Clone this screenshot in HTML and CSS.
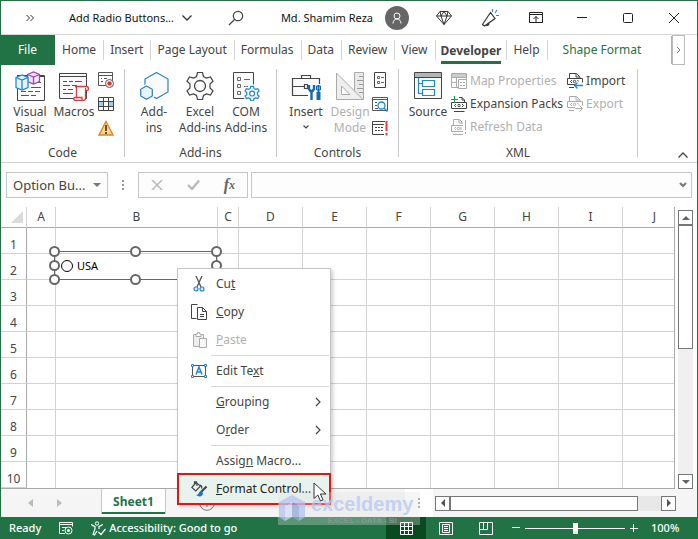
FILE: index.html
```
<!DOCTYPE html>
<html lang="en">
<head>
	<meta charset="utf-8">
	<title>Add Radio Buttons - Excel</title>
	<link rel="stylesheet" href="styles.css">
</head>
<body>
	<div class="window">
		<header class="title-bar">
			<button class="more" aria-label="More commands"><svg width="10" height="8" viewBox="0 0 10 8"><path d="M1.5 1l3 3-3 3M5.500 1l3 3-3 3" stroke="#333"/></svg></button>
			<button class="file-name">Add Radio Buttons... <svg width="10" height="6" viewBox="0 0 10 6"><path d="M.5.5L5 5 9.500.5" stroke="#333" stroke-width="1.300"/></svg></button>
			<button class="search" aria-label="Search"><svg width="16" height="16" viewBox="0 0 16 16"><circle cx="10" cy="6" r="4.700" stroke="#444" stroke-width="1.200"/><path d="M6.500 9.500L1 15" stroke="#444" stroke-width="1.300"/></svg></button>
			<span class="user">Md. Shamim Reza</span>
			<button class="avatar" aria-label="Account"><svg width="10" height="12" viewBox="0 0 10 12"><circle cx="5" cy="4" r="3" stroke="#fff"/><path d="M1 11.500c0-6 8-6 8 0" stroke="#fff"/></svg></button>
			<button class="win" aria-label="Premium"><svg width="16" height="14" viewBox="0 0 16 14"><path d="M4 .5h8l3.500 4.500L8 13.500.5 5zM.5 5h15M4 .5L5 5l3 8.500L11 5l1-4.500M5 5l3-4.500L11 5" stroke="#333"/></svg></button>
			<button class="win" aria-label="What's new"><svg width="18" height="18" viewBox="0 0 18 18"><path d="M9.500 3.500L1.500 15.500l2 1.500L14 9.500zM5 15.500c1 2 3.500.5 2.800-1.500" stroke="#333" stroke-width="1.200"/><path d="M11.500 3V0M14 4l2-3M15 6.500h3" stroke="#2a8dd4" stroke-width="1.200"/></svg></button>
			<button class="win" aria-label="Ribbon display options"><svg width="14" height="12" viewBox="0 0 14 12"><path d="M.5.500h13v10H.5zM.5 2.500h13M7 10V4.500M4.500 7L7 4.500 9.500 7" stroke="#222"/></svg></button>
			<button class="win" aria-label="Minimize"><svg width="10" height="10" viewBox="0 0 10 10"><path d="M0 4.500h10" stroke="#222"/></svg></button>
			<button class="win" aria-label="Maximize"><svg width="10" height="10" viewBox="0 0 10 10"><rect x=".5" y=".5" width="9" height="9" rx="1" stroke="#222"/></svg></button>
			<button class="win" aria-label="Close"><svg width="10" height="10" viewBox="0 0 10 10"><path d="M0 0l10 10M10 0L0 10" stroke="#222"/></svg></button>
		</header>

		<nav class="tabs">
			<button class="tab file">File</button>
			<button class="tab home">Home</button>
			<button class="tab">Insert</button>
			<button class="tab">Page Layout</button>
			<button class="tab">Formulas</button>
			<button class="tab">Data</button>
			<button class="tab">Review</button>
			<button class="tab">View</button>
			<button class="tab active"><span>Developer</span></button>
			<button class="tab">Help</button>
			<button class="tab context">Shape Format</button>
			<button class="tab-next" aria-label="Scroll tabs"><svg width="5" height="6" viewBox="0 0 5 6"><path d="M1 0l3 3-3 3" stroke="#777"/></svg></button>
		</nav>

		<section class="ribbon">
			<div class="group code">
				<div class="tools">
					<button class="tool">
						<svg width="30" height="30" viewBox="0 0 30 30"><path d="M2.500 4.500h27v25h-27z" fill="#fff" stroke="#444"/><path d="M2 5h27" stroke="#444" stroke-width="2"/><path d="M16 11.500h4M22 11.500h4M16 16.500h10M6 20.500h5M13 20.500h5M20 20.500h5M6 24.500h8M16 24.500h5" stroke="#555"/><path d="M12.500 3.500L18.500 1l6 2.500v7l-6 2.500-6-2.500z" fill="#f3e6f7" stroke="#a540b5" stroke-width="1.300"/><path d="M12.500 3.500l6 2.500 6-2.500M18.500 6v7" stroke="#a540b5" stroke-width="1.300"/><path d="M1 6.500L7 4l6 2.500v10L7 19l-6-2.500z" fill="#e7f3fc" stroke="#2188d0" stroke-width="1.300"/><path d="M1 6.500L7 9l6-2.500M7 9v10" stroke="#2188d0" stroke-width="1.300"/></svg>
						<span>Visual<br>Basic</span>
					</button>
					<button class="tool">
						<svg width="30" height="30" viewBox="0 0 30 30"><path d="M.5 2.500h27v25H.5z" fill="#fafafa" stroke="#444"/><path d="M.5 5.500h27" stroke="#444"/><path d="M4 10.500h4M10 10.500h4M16 10.500h7M4 14.500h7M13 14.500h5M4 18.500h3M9 18.500h5M4 22.500h10" stroke="#555"/><path d="M16.500 15.500h11c2.500 0 2.500 4 0 4h-1.500v8c0 2.500-3 2.500-3 0v-1.500h-6.500" fill="#fff"/><path d="M17 15.500h10.500c2.500 0 2.500 4 .5 4h-1.500v7.500c0 2-1 2.500-2 2.500H16c-1.500 0-1.500-3 0-3h7v1.500c0 1 .5 1.500 1.500 1.500M17.500 26V17c0-1-.5-1.500-1.500-1.500h3M26.500 19v-2" fill="#fff" stroke="#e8373d" stroke-width="1.300"/></svg>
						<span>Macros</span>
					</button>
				</div>
				<div class="small-tools">
					<button aria-label="Record Macro"><svg width="16" height="16" viewBox="0 0 16 16"><path d="M.5.500h14v13H.5zM.5 3.500h14M3 6.500h1M6 6.500h3M3 9.500h2" stroke="#555"/><circle cx="11.500" cy="11.500" r="4" fill="#fff" stroke="#555"/><circle cx="11.500" cy="11.500" r="2.200" fill="#ee2c2c"/></svg></button>
					<button aria-label="Use Relative References"><svg width="16" height="14" viewBox="0 0 16 14"><path fill="#9fcdf0" d="M0 5h5v4H0zM11 5h5v4h-5z"/><path d="M.5.500h15v13H.5zM.5 4.500h15M.5 9.500h15M5.500 0v14M10.500 0v14" stroke="#444"/></svg></button>
					<button aria-label="Macro Security"><svg width="16" height="16" viewBox="0 0 16 16"><path d="M8 1.500l7 13.500H1z" fill="#fbd68c" stroke="#e8811a" stroke-width="1.300"/><path d="M8 5v6M8 12v2" stroke="#333" stroke-width="1.600"/></svg></button>
				</div>
				<div class="group-name">Code</div>
			</div>

			<div class="group addins">
				<div class="tools">
					<button class="tool">
						<svg width="30" height="30" viewBox="0 0 30 30"><path d="M17.500 1.500L29 8v13l-11.500 6.500L6 21V8z" fill="#fafafa" stroke="#2a80c8" stroke-width="1.200"/><path d="M7.500 15l5.800 3.300v6.600l-5.800 3.300-5.800-3.300v-6.600z" fill="#fff" stroke="#fff" stroke-width="4"/><path d="M7.500 15l5.800 3.300v6.600l-5.800 3.300-5.800-3.300v-6.600z" fill="#e9f4fc" stroke="#2a80c8" stroke-width="1.200"/></svg>
						<span>Add-<br>ins</span>
					</button>
					<button class="tool">
						<svg width="30" height="30" viewBox="0 0 30 30"><path d="M12.500 1.500h5l1 4 3 1.600 4-1.100 2.500 4.200-3 2.800v4l3 2.800-2.500 4.200-4-1.100-3 1.600-1 4h-5l-1-4-3-1.600-4 1.100L2 19.800 5 17v-4l-3-2.800L4.500 6l4 1.100 3-1.600z" fill="#fafafa" stroke="#444" stroke-width="1.200"/><circle cx="15" cy="15" r="5.500" fill="#fff" stroke="#444" stroke-width="1.300"/></svg>
						<span>Excel<br>Add-ins</span>
					</button>
					<button class="tool">
						<svg width="30" height="30" viewBox="0 0 30 30"><path d="M2.500 1.500h20v26h-20z" fill="#fafafa" stroke="#444"/><path d="M6.500 6.500h3v3h-3zM6.500 13.500h3v3h-3zM6.500 20.500h3v3h-3zM13 8.500h6M13 15.500h4" stroke="#666"/><g transform="translate(13 14.500) scale(.54)"><path d="M12.500 1.500h5l1 4 3 1.600 4-1.100 2.500 4.200-3 2.800v4l3 2.800-2.500 4.200-4-1.100-3 1.600-1 4h-5l-1-4-3-1.600-4 1.100L2 19.800 5 17v-4l-3-2.800L4.500 6l4 1.100 3-1.600z" fill="#fff" stroke="#fff" stroke-width="7"/><path d="M12.500 1.500h5l1 4 3 1.600 4-1.100 2.500 4.200-3 2.800v4l3 2.800-2.500 4.200-4-1.100-3 1.600-1 4h-5l-1-4-3-1.600-4 1.100L2 19.800 5 17v-4l-3-2.800L4.500 6l4 1.100 3-1.600z" fill="#e9f4fc" stroke="#2188d0" stroke-width="2.200"/><circle cx="15" cy="15" r="4.500" fill="#fff" stroke="#2188d0" stroke-width="2.200"/></g></svg>
						<span>COM<br>Add-ins</span>
					</button>
				</div>
				<div class="group-name">Add-ins</div>
			</div>

			<div class="group controls">
				<div class="tools">
					<button class="tool">
						<svg width="30" height="30" viewBox="0 0 30 30"><path d="M1.500 7.500h27v17h-27zM10.500 7v-2.500h9V7" fill="#fafafa" stroke="#444" stroke-width="1.200"/><path d="M1.500 15.500h12M17 15.500h11M13.500 13.500h3v4h-3z" stroke="#444" stroke-width="1.200"/><path d="M17 13h13v17H17z" fill="#fff"/><path d="M18 14v4l1.500 2h2l1.500-2v-4M20.500 20v9" stroke="#1668b3" stroke-width="2.400"/><path d="M27.500 14v7" stroke="#1668b3" stroke-width="2"/><path d="M25.500 15h4v4h-4z" stroke="#1668b3"/><path d="M27.500 21v8" stroke="#1668b3" stroke-width="4"/></svg>
						<span>Insert<br><svg class="drop" width="6" height="4" viewBox="0 0 6 4"><path d="M.5.500L3 3 5.500.5" stroke="#444" stroke-width="1.200"/></svg></span>
					</button>
					<button class="tool" disabled>
						<svg width="30" height="30" viewBox="0 0 30 30"><path d="M19.500 1.500h9v27h-9z" fill="#e9e9e9" stroke="#aaa"/><path d="M24 5.500h4M22 9.500h6M24 13.500h4M22 17.500h6M24 21.500h4" stroke="#999"/><path d="M1.500 2v26.500H28z" fill="#eee" stroke="#aaa"/><path d="M6.500 15v8.500h8.500z" fill="#fff" stroke="#aaa"/></svg>
						<span>Design<br>Mode</span>
					</button>
				</div>
				<div class="small-tools">
					<button aria-label="Properties"><svg width="16" height="16" viewBox="0 0 16 16"><path d="M2.500.500h11v15h-11z" stroke="#444"/><path d="M5.500 4.500h2v2h-2zM5.500 9.500h2v2h-2zM9 5.500h3M9 10.500h3" stroke="#666"/></svg></button>
					<button aria-label="View Code"><svg width="16" height="16" viewBox="0 0 16 16"><path d="M.5 1.500h15v13H.5zM.5 3.500h15M3 6.500h2M3 9.500h2M3 12.500h3" stroke="#555"/><circle cx="9.500" cy="9.500" r="3.500" fill="#eaf5fd" stroke="#2188d0" stroke-width="1.300"/><path d="M12 12l3.500 3.500" stroke="#2188d0" stroke-width="1.500"/></svg></button>
					<button aria-label="Run Dialog"><svg width="16" height="16" viewBox="0 0 16 16"><path d="M13 1.500H.5v13H12M.5 4.500H12M3 7.500h2M6 7.500h2M9 7.500h2M3 10.500h2M6 10.500h2M9 10.500h2" stroke="#444"/><path d="M14.500 1v10M14.500 13v2.500" stroke="#f03a3a" stroke-width="2"/></svg></button>
				</div>
				<div class="group-name">Controls</div>
			</div>

			<div class="group xml">
				<div class="tools">
					<button class="tool">
						<svg width="30" height="30" viewBox="0 0 30 30"><path d="M1.500 1.500h27v26h-27z" fill="#fafafa" stroke="#444"/><path d="M2 2h26v4H2z" fill="#b5b5b5"/><path d="M1.500 6.500h27" stroke="#444"/><path d="M5.500 7v15.500h4M5.500 12.500h4M9.500 9.500h12v6h-12zM9.500 18.500h12v6h-12z" stroke="#2188d0" stroke-width="1.200"/></svg>
						<span>Source</span>
					</button>
				</div>
				<div class="commands">
					<button disabled><svg width="16" height="16" viewBox="0 0 16 16"><path d="M.5.500h15v14H.5zM.5 4.500h15M.5 9.500H6M5.500 1v14M10.500 1v4" stroke="#aaa"/><path fill="#ccc" d="M1 1h14v3H1z"/><path d="M7.500 6.500h8v9h-8z" fill="#fff" stroke="#aaa"/><path d="M9 9h2v1H9zM9 12h2v1H9zM12 9h2v1h-2zM12 12h2v1h-2z" fill="#aaa"/></svg>Map Properties</button>
					<button><svg width="16" height="16" viewBox="0 0 16 16"><path d="M8 1.500h3l2.500 2.500v2M11 1.500V4h2.500M3 15.500h10.500M.5 6.500h15v6H.5z" stroke="#444"/><path d="M5 8L3.500 9.500 5 11M11 8l1.500 1.500L11 11" stroke="#444"/><circle cx="8" cy="9.500" r="1.200" stroke="#444"/><path d="M3.500 0v7M0 3.500h7" stroke="#1f9a4c" stroke-width="1.200"/></svg>Expansion Packs</button>
					<button disabled><svg width="16" height="16" viewBox="0 0 16 16"><path d="M2.500 6V.5h6L11 3v2M8 .500V4h3M2 15.500h10M12 6.500H.5v6H12M14.500 1v10M14.500 13v2" stroke="#aaa"/><path d="M5 8L3.500 9.500 5 11M10 8v3" stroke="#aaa"/><circle cx="7.500" cy="9.500" r="1.200" stroke="#aaa"/></svg>Refresh Data</button>
					<button><svg width="16" height="16" viewBox="0 0 16 16"><path d="M2.500 5V.5h7L13 4v1.500M9 .500V4h4M2 14.500h5M8 11.500H.5v-6h15v4" stroke="#444"/><path d="M5 7L3.500 8.500 5 10M10.500 7l1 1.500" stroke="#444"/><circle cx="7.500" cy="8.500" r="1.200" stroke="#444"/><path d="M16 12.500H7.500M10.500 9.500l-3 3 3 3" stroke="#2188d0" stroke-width="1.300"/></svg>Import</button>
					<button disabled><svg width="16" height="16" viewBox="0 0 16 16"><path d="M2.500 5V.5h7L13 4v1.500M9 .500V4h4M2 14.500h5M8 11.500H.5v-6h15v4" stroke="#aaa"/><path d="M5 7L3.500 8.500 5 10M10.500 7l1 1.500" stroke="#aaa"/><circle cx="7.500" cy="8.500" r="1.200" stroke="#aaa"/><path d="M8 12.500h7.500M12.500 9.500l3 3-3 3" stroke="#aaa"/></svg>Export</button>
				</div>
				<div class="group-name">XML</div>
			</div>

			<button class="collapse" aria-label="Collapse the ribbon"><svg width="10" height="6" viewBox="0 0 10 6"><path d="M.5 5.500L5 1l4.500 4.500" stroke="#444" stroke-width="1.300"/></svg></button>
		</section>

		<div class="formula-bar">
			<div class="name-box">
				<input type="text" aria-label="Name box" value="Option Bu...">
				<button aria-label="Open name list"><svg width="8" height="4" viewBox="0 0 8 4"><path d="M0 0h8L4 4z" fill="#777"/></svg></button>
			</div>
			<svg class="grip" width="2" height="10" viewBox="0 0 2 10"><path d="M1 0v2M1 4v2M1 8v2" stroke="#999" stroke-width="2"/></svg>
			<div class="formula-buttons">
				<button aria-label="Cancel"><svg width="12" height="10" viewBox="0 0 12 10"><path d="M1 0l10 10M11 0L1 10" stroke="#bbb" stroke-width="1.600"/></svg></button>
				<button aria-label="Enter"><svg width="13" height="10" viewBox="0 0 13 10"><path d="M1 5l4 4 7-8.500" stroke="#bbb" stroke-width="2.400"/></svg></button>
				<button class="fx" aria-label="Insert function">f<small>x</small></button>
			</div>
			<div class="formula">
				<input type="text" aria-label="Formula bar">
				<button aria-label="Expand formula bar"><svg width="8" height="6" viewBox="0 0 8 6"><path d="M1 1l3 3 3-3" stroke="#777" stroke-width="2"/></svg></button>
			</div>
		</div>

		<main class="sheet-area">
			<table class="sheet">
				<colgroup><col class="c-num"><col class="c-a"><col class="c-b"><col class="c-c"><col class="c-std"><col class="c-std"><col class="c-std"><col class="c-std"><col class="c-std"><col class="c-std"><col></colgroup>
				<thead>
					<tr><th class="corner"><svg width="12" height="12" viewBox="0 0 12 12"><path d="M12 0v12H0z" fill="#dadada"/></svg></th><th>A</th><th>B</th><th>C</th><th>D</th><th>E</th><th>F</th><th>G</th><th>H</th><th>I</th><th class="last">J</th></tr>
				</thead>
				<tbody>
					<tr><th>1</th><td></td><td></td><td></td><td></td><td></td><td></td><td></td><td></td><td></td><td></td></tr>
					<tr><th>2</th><td></td><td></td><td></td><td></td><td></td><td></td><td></td><td></td><td></td><td></td></tr>
					<tr><th>3</th><td></td><td></td><td></td><td></td><td></td><td></td><td></td><td></td><td></td><td></td></tr>
					<tr><th>4</th><td></td><td></td><td></td><td></td><td></td><td></td><td></td><td></td><td></td><td></td></tr>
					<tr><th>5</th><td></td><td></td><td></td><td></td><td></td><td></td><td></td><td></td><td></td><td></td></tr>
					<tr><th>6</th><td></td><td></td><td></td><td></td><td></td><td></td><td></td><td></td><td></td><td></td></tr>
					<tr><th>7</th><td></td><td></td><td></td><td></td><td></td><td></td><td></td><td></td><td></td><td></td></tr>
					<tr><th>8</th><td></td><td></td><td></td><td></td><td></td><td></td><td></td><td></td><td></td><td></td></tr>
					<tr><th>9</th><td></td><td></td><td></td><td></td><td></td><td></td><td></td><td></td><td></td><td></td></tr>
					<tr><th>10</th><td></td><td></td><td></td><td></td><td></td><td></td><td></td><td></td><td></td><td></td></tr>
				</tbody>
			</table>
			<div class="v-scroll">
				<button aria-label="Scroll up"><svg width="8" height="4" viewBox="0 0 8 4"><path d="M0 4h8L4 0z" fill="#666"/></svg></button>
				<div class="thumb"></div>
				<button aria-label="Scroll down"><svg width="8" height="4" viewBox="0 0 8 4"><path d="M0 0h8L4 4z" fill="#666"/></svg></button>
			</div>

			<!-- selected option button with its resize handles -->
			<div class="shape">
				<label><input type="radio" name="country">USA</label>
				<i class="handle top left"></i><i class="handle top center"></i><i class="handle top right"></i>
				<i class="handle middle left"></i><i class="handle middle right"></i>
				<i class="handle bottom left"></i><i class="handle bottom center"></i><i class="handle bottom right"></i>
			</div>

			<div class="menu" role="menu">
				<button role="menuitem"><svg width="16" height="16" viewBox="0 0 16 16"><path d="M5 0l5 11M11 0L6 11" stroke="#555" stroke-width="1.300"/><circle cx="5" cy="13" r="2" fill="#d4ebfa" stroke="#2188d0" stroke-width="1.200"/><circle cx="11" cy="13" r="2" fill="#d4ebfa" stroke="#2188d0" stroke-width="1.200"/></svg><span>Cu<u>t</u></span></button>
				<button role="menuitem"><svg width="16" height="16" viewBox="0 0 16 16"><path d="M5.500 14.500H.5V.5h6M6.500 3.500h5l4 4v8h-9zM11.500 3.500v4h4M9 10.500h4M9 12.500h4" stroke="#444"/></svg><span><u>C</u>opy</span></button>
				<button role="menuitem" disabled><svg width="16" height="16" viewBox="0 0 16 16"><path d="M2.500 2.500h10v12h-10z" fill="#eee" stroke="#aaa"/><path d="M5 4.500V2h1.500V.5h2V2H10v2.500z" fill="#fff" stroke="#aaa"/><path d="M8.500 6.500h7v9h-7z" fill="#f8f8f8" stroke="#aaa"/></svg><span><u>P</u>aste</span></button>
				<hr>
				<button role="menuitem"><svg width="16" height="14" viewBox="0 0 16 14"><path d="M1.500 1.500h13v11h-13z" stroke="#555"/><path d="M5 10.500L8 3l3 7.500M6 8h4" stroke="#2188d0" stroke-width="1.500"/><path d="M.5.500h2v2h-2zM13.500.5h2v2h-2zM.5 11.500h2v2h-2zM13.500 11.500h2v2h-2z" fill="#fff" stroke="#2188d0"/></svg><span>Edit Te<u>x</u>t</span></button>
				<hr>
				<button role="menuitem"><span><u>G</u>rouping</span><svg class="arrow" width="6" height="10" viewBox="0 0 6 10"><path d="M1 1l4 4-4 4" stroke="#444" stroke-width="1.200"/></svg></button>
				<button role="menuitem"><span>O<u>r</u>der</span><svg class="arrow" width="6" height="10" viewBox="0 0 6 10"><path d="M1 1l4 4-4 4" stroke="#444" stroke-width="1.200"/></svg></button>
				<hr>
				<button role="menuitem"><span>Assig<u>n</u> Macro...</span></button>
				<button role="menuitem" class="highlight"><svg width="16" height="16" viewBox="0 0 16 16"><path d="M5 1.500L.8 6.500l4 3.500 4.700-5zM3.500 3V.8h2L6 5M9 4c2 .5 2 2 1.500 3.500" stroke="#444" stroke-width="1.200"/><path d="M15.500 5.500L10 11" stroke="#444" stroke-width="2.200"/><path d="M10.500 10c-3-.5-2 4-5.500 4 3 2.500 7 1.500 7-2z" fill="#1876c8"/></svg><span><u>F</u>ormat Control...</span></button>
			</div>
		</main>

		<div class="sheet-tabs">
			<button class="nav-arrow" aria-label="Previous sheet"><svg width="5" height="8" viewBox="0 0 5 8"><path d="M5 0v8L0 4z" fill="#bbb"/></svg></button>
			<button class="nav-arrow" aria-label="Next sheet"><svg width="5" height="8" viewBox="0 0 5 8"><path d="M0 0v8l5-4z" fill="#bbb"/></svg></button>
			<button class="sheet-tab">Sheet1</button>
			<button class="add-sheet" aria-label="New sheet"><svg width="16" height="16" viewBox="0 0 16 16"><circle cx="8" cy="8" r="7.300" stroke="#777"/><path d="M8 4v8M4 8h8" stroke="#777"/></svg></button>
			<div class="splitter"><svg width="2" height="10" viewBox="0 0 2 10"><path d="M1 0v2M1 4v2M1 8v2" stroke="#999" stroke-width="2"/></svg></div>
			<div class="h-scroll">
				<button aria-label="Scroll left"><svg width="4" height="8" viewBox="0 0 4 8"><path d="M4 0v8L0 4z" fill="#555"/></svg></button>
				<div class="thumb"></div>
				<button aria-label="Scroll right"><svg width="4" height="8" viewBox="0 0 4 8"><path d="M0 0v8l4-4z" fill="#555"/></svg></button>
			</div>
			<div class="watermark">
				<svg width="28" height="30" viewBox="0 0 28 30"><path d="M14 1l13 7v15l-6 4V12l-7-4-7 4v15l-6-4V8z" fill="#b6c5f0"/><path d="M14 8l7 4v15l-7-4z" fill="#98abd9"/><path d="M14 8l-7 4v15l7-4z" fill="#d5def5"/></svg>
				<div class="brand"><b>exceldemy</b><small>EXCEL - DATA - BI</small></div>
			</div>
			<svg class="cursor" width="14" height="20" viewBox="0 0 14 20"><path d="M1 1v15.500l3.800-3.500 2.700 6 2.500-1.200-2.600-5.800H13z" fill="#fff" stroke="#333"/></svg>
		</div>

		<footer class="status-bar">
			<span class="ready">Ready</span>
			<button class="record" aria-label="Record macro"><svg width="14" height="13" viewBox="0 0 14 13"><path d="M6 11.500H.5V.5h13v4M.5 2.500h13M3 5.500h4M3 8.500h2" stroke="#fff"/><circle cx="9.500" cy="8.500" r="3.500" stroke="#fff"/><circle cx="9.500" cy="8.500" r="1.500" fill="#fff"/></svg></button>
			<button class="access"><svg width="15" height="15" viewBox="0 0 15 15"><circle cx="6" cy="2.500" r="1.700" stroke="#fff"/><path d="M.5 3c0 2 3 2 3.500 2.500V8l-2 5.500 1.500.5L6 10M11.500 3c0 2-3 2-3.500 2.500V8M7.500 11l2.500 2.500L14.500 8" stroke="#fff" stroke-width="1.200"/></svg>Accessibility: Good to go</button>
			<button class="view current" aria-label="Normal view"><svg width="13" height="13" viewBox="0 0 13 13"><path d="M.5.500h12v12H.5zM.5 4.500h12M.5 8.500h12M4.500 0v13M8.500 0v13" stroke="#fff"/></svg></button>
			<button class="view" aria-label="Page layout view"><svg width="14" height="13" viewBox="0 0 14 13"><path d="M.5.500h13v12H.5zM3.500 2.500h7v8h-7zM5 4.500h4M5 6.500h4M5 8.500h4" stroke="#fff"/></svg></button>
			<button class="view" aria-label="Page break view"><svg width="14" height="13" viewBox="0 0 14 13"><path d="M.5.500h13v12H.5zM.5 7.500h8V.5M4.500 0v8" stroke="#fff"/></svg></button>
			<div class="zoom">
				<button aria-label="Zoom out"><svg width="8" height="8" viewBox="0 0 8 8"><path d="M0 3.500h8" stroke="#fff"/></svg></button>
				<input type="range" aria-label="Zoom" min="0" max="200" value="100">
				<button aria-label="Zoom in"><svg width="8" height="8" viewBox="0 0 8 8"><path d="M0 4.500h8M3.500 0v8" stroke="#fff"/></svg></button>
			</div>
			<span class="percent">100%</span>
		</footer>
	</div>
</body>
</html>
```

FILE: styles.css
```
* {
	box-sizing: border-box;
}

body {
	margin: 0;
	font-family: "Noto Sans", "Open Sans", sans-serif;
	font-size: 12px;
	line-height: 16px;
	color: #444;
	background-color: #fff;
}

button,
input {
	font: inherit;
	color: inherit;
	margin: 0;
	padding: 0;
	border: 0;
	background: none;
}

button {
	display: flex;
	align-items: center;
	justify-content: center;
	white-space: nowrap;
}

button:disabled {
	color: #b0b0b0;
}

input {
	min-width: 0;
	outline: none;
}

svg {
	flex: none;
	fill: none;
}

.window {
	display: flex;
	flex-direction: column;
	min-height: 100vh;
	border: 1px solid #217346;
	border-bottom: 0;
}

/* title bar */
.title-bar {
	display: flex;
	align-items: center;
	height: 34px;
	border-bottom: 1px solid #d8d8d8;
	font-size: 11px;
	color: #111;
}

.more {
	width: 58px;
}

.file-name {
	margin-left: 10px;
	gap: 8px;
}

.search {
	width: 16px;
	margin-left: 36px;
}

.user {
	margin-left: auto;
	white-space: nowrap;
}

.avatar {
	width: 24px;
	height: 24px;
	margin: 0 12px;
	border-radius: 50%;
	background-color: #666;
}

.win {
	width: 46px;
	height: 33px;
}

/* ribbon tabs */
.tabs {
	display: flex;
	height: 30px;
}

.tab {
	padding: 0 7px 0 6px;
	border-right: 1px solid transparent;
	border-image: linear-gradient(transparent 6px, #d4d4d4 6px, #d4d4d4 24px, transparent 24px) 1;
}

.tab.file {
	width: 54px;
	border: 0;
	color: #fff;
	background-color: #217346;
}

.tab.home {
	padding-left: 7px;
}

.tab.active {
	padding: 0 5px;
	font-weight: bold;
}

.tab.active span {
	height: 28px;
	line-height: 30px;
	border-bottom: 3px solid #217346;
}

.tab.context {
	margin-left: 9px;
	border: 0;
	color: #217346;
}

.tab-next {
	width: 13px;
	margin-left: auto;
	margin-right: 12px;
	border: 1px solid #bbb;
	box-shadow: -2px 0 0 -1px #8cc3a3;
}

/* ribbon */
.ribbon {
	display: flex;
	height: 98px;
	padding-top: 4px;
	border-bottom: 1px solid #d0d0d0;
}

.group {
	display: grid;
	grid-template-columns: auto 1fr;
	grid-template-rows: 76px 16px;
	height: 88px;
	border-right: 1px solid #c8c8c8;
}

.group-name {
	grid-column: 1 / -1;
	text-align: center;
}

.tools {
	display: flex;
	padding-left: 7px;
}

.tool {
	flex-direction: column;
	justify-content: flex-start;
	width: 44px;
	padding-top: 2px;
	gap: 3px;
}

.tool .drop {
	margin-bottom: 3px;
}

.small-tools {
	display: flex;
	flex-direction: column;
	gap: 8px;
	padding-top: 3px;
}

.small-tools button {
	width: 16px;
	height: 16px;
}

.code {
	width: 124px;
}

.code .small-tools {
	padding-left: 2px;
}

.addins {
	width: 152px;
}

.addins .tools {
	padding-left: 6px;
}

.addins .tool {
	width: 46px;
}

.controls {
	width: 122px;
}

.xml {
	width: 239px;
}

.commands {
	display: grid;
	grid-template-rows: repeat(3, 23px);
	grid-auto-flow: column;
	justify-content: start;
	column-gap: 4px;
	padding-left: 1px;
}

.commands button {
	justify-content: flex-start;
	gap: 3px;
}

.collapse {
	align-self: flex-end;
	margin: 0 9px 4px auto;
}

/* formula bar */
.formula-bar {
	display: flex;
	align-items: center;
	height: 44px;
	padding: 0 5px;
}

.name-box,
.formula-buttons,
.formula {
	display: flex;
	height: 26px;
	border: 1px solid #c6c6c6;
	background-color: #fdfdfd;
}

.name-box {
	width: 102px;
	padding: 0 6px;
}

.name-box input,
.formula input {
	flex: 1;
	font-size: 13px;
}

.grip {
	margin: 0 14px;
}

.formula-buttons {
	width: 110px;
	justify-content: space-around;
	margin-right: 3px;
}

.fx {
	font-family: "Liberation Serif", serif;
	font-style: italic;
	font-weight: bold;
	font-size: 16px;
	color: #666;
}

.fx small {
	font-size: 12px;
}

.formula {
	flex: 1;
	padding-right: 4px;
}

/* worksheet */
.sheet-area {
	position: relative;
	display: flex;
	padding-right: 4px;
}

.sheet {
	flex: 1;
	width: 100%;
	table-layout: fixed;
	border-collapse: separate;
	border-spacing: 0;
	align-self: flex-start;
	border-right: 1px solid #aaa;
	border-bottom: 1px solid #aaa;
}

.c-num {
	width: 26px;
}

.c-a {
	width: 29px;
}

.c-b {
	width: 162px;
}

.c-c {
	width: 21px;
}

.c-std {
	width: 64px;
}

.sheet th,
.sheet td {
	height: 26px;
	padding: 0;
	font-weight: normal;
	border-right: 1px solid #d2d2d2;
	border-bottom: 1px solid #d2d2d2;
}

.sheet thead th {
	height: 21px;
	border-bottom-color: #aaa;
}

.sheet thead .corner {
	text-align: right;
	padding-right: 3px;
	line-height: 10px;
}

.sheet thead .last {
	padding-left: 12px;
}

.sheet tbody th {
	vertical-align: bottom;
	border-right-color: #aaa;
}

.sheet td:last-child,
.sheet th:last-child {
	border-right: 0;
}

.sheet tr:last-child td {
	border-bottom: 0;
}

.v-scroll {
	display: flex;
	flex-direction: column;
	width: 15px;
	margin: 3px 0 0 3px;
	background-color: #f0f0f0;
}

.v-scroll button,
.h-scroll button {
	width: 15px;
	height: 15px;
	border: 1px solid #777;
	background-color: #fff;
}

.v-scroll .thumb {
	height: 124px;
	margin-bottom: auto;
	border: 1px solid #777;
	background-color: #fff;
}

/* option button on the sheet */
.shape {
	position: absolute;
	left: 53px;
	top: 44px;
	width: 163px;
	height: 29px;
	border: 1px solid #666;
}

.shape label {
	display: flex;
	align-items: center;
	height: 27px;
	padding-left: 6px;
	gap: 4px;
	font-size: 11px;
	color: #000;
}

.shape input {
	appearance: none;
	width: 12px;
	height: 12px;
	border: 1px solid #000;
	border-radius: 50%;
}

.handle {
	position: absolute;
	width: 11px;
	height: 11px;
	border: 2px solid #666;
	border-radius: 50%;
	background-color: #fff;
}

.handle.top {
	top: -6px;
}

.handle.middle {
	top: 8px;
}

.handle.bottom {
	bottom: -6px;
}

.handle.left {
	left: -6px;
}

.handle.center {
	left: 75px;
}

.handle.right {
	right: -6px;
}

/* context menu */
.menu {
	position: absolute;
	left: 176px;
	top: 61px;
	z-index: 2;
	width: 154px;
	padding: 1px 1px 0;
	border: 1px solid #c6c6c6;
	background-color: #fff;
	box-shadow: 2px 2px 4px rgba(0, 0, 0, 0.2);
}

.menu button {
	width: 100%;
	height: 28px;
	justify-content: flex-start;
	padding-left: 12px;
	padding-right: 8px;
}

.menu button > svg:first-child {
	width: 16px;
	margin-right: 9px;
}

.menu button > span:first-child {
	margin-left: 25px;
}

.menu .arrow {
	margin-left: auto;
}

.menu hr {
	margin: 1px 0 1px 32px;
	border: 0;
	border-top: 1px solid #d8d8d8;
}

.menu .highlight {
	color: #222;
	background-color: #e8f3ee;
	outline: 2px solid #ee1111;
}

/* sheet tabs */
.sheet-tabs {
	position: relative;
	display: flex;
	flex: 1;
	align-items: center;
	min-height: 28px;
	padding-right: 21px;
	background-color: #f5f5f5;
}

.nav-arrow {
	width: 29px;
	height: 28px;
}

.nav-arrow:first-child {
	margin-left: 15px;
}

.sheet-tab {
	align-self: flex-start;
	width: 65px;
	height: 25px;
	margin-left: 27px;
	font-size: 12px;
	font-weight: bold;
	color: #217346;
	background-color: #fff;
	border: 1px solid #c6c6c6;
	border-width: 0 1px;
	box-shadow: inset 0 -2px 0 #217346;
}

.add-sheet {
	margin-left: 33px;
}

.splitter {
	display: flex;
	align-items: center;
	justify-content: center;
	align-self: stretch;
	width: 28px;
	margin-left: auto;
	background-color: #fff;
}

.h-scroll {
	display: flex;
	width: 241px;
	margin-left: 2px;
	background-color: #e8e8e8;
}

.h-scroll .thumb {
	width: 188px;
	margin-right: auto;
	border: 1px solid #777;
	background-color: #fff;
}

.watermark {
	position: absolute;
	left: 277px;
	top: 3px;
	z-index: 3;
	display: flex;
	align-items: center;
	width: 142px;
	height: 33px;
	gap: 5px;
	background-color: rgba(225, 225, 225, 0.4);
	opacity: 0.8;
}

.brand {
	display: flex;
	flex-direction: column;
	align-items: center;
	font-family: "Liberation Sans", Arial, sans-serif;
	color: #b9c7f1;
}

.brand b {
	font-size: 20px;
	line-height: 23px;
}

.brand small {
	font-size: 8px;
	line-height: 9px;
	font-weight: bold;
	color: #9ba5a5;
}

.cursor {
	position: absolute;
	left: 312px;
	top: -7px;
	z-index: 4;
}

/* status bar */
.status-bar {
	display: flex;
	align-items: center;
	height: 22px;
	padding: 0 18px 0 8px;
	font-size: 11px;
	font-weight: 500;
	color: #fff;
	background-color: #217346;
}

.record {
	margin: 0 18px;
}

.access {
	gap: 3px;
	margin-right: auto;
}

.view {
	width: 40px;
	height: 22px;
}

.view.current {
	background-color: #0a4a20;
}

.zoom {
	display: flex;
	align-items: center;
	gap: 5px;
	margin-left: 6px;
}

.zoom input {
	appearance: none;
	width: 100px;
	height: 12px;
	background: linear-gradient(#fff, #fff) center / 100% 1px no-repeat;
}

.zoom input::-webkit-slider-thumb {
	appearance: none;
	width: 5px;
	height: 11px;
	background-color: #fff;
}

.percent {
	width: 28px;
	margin-left: 13px;
}
```
